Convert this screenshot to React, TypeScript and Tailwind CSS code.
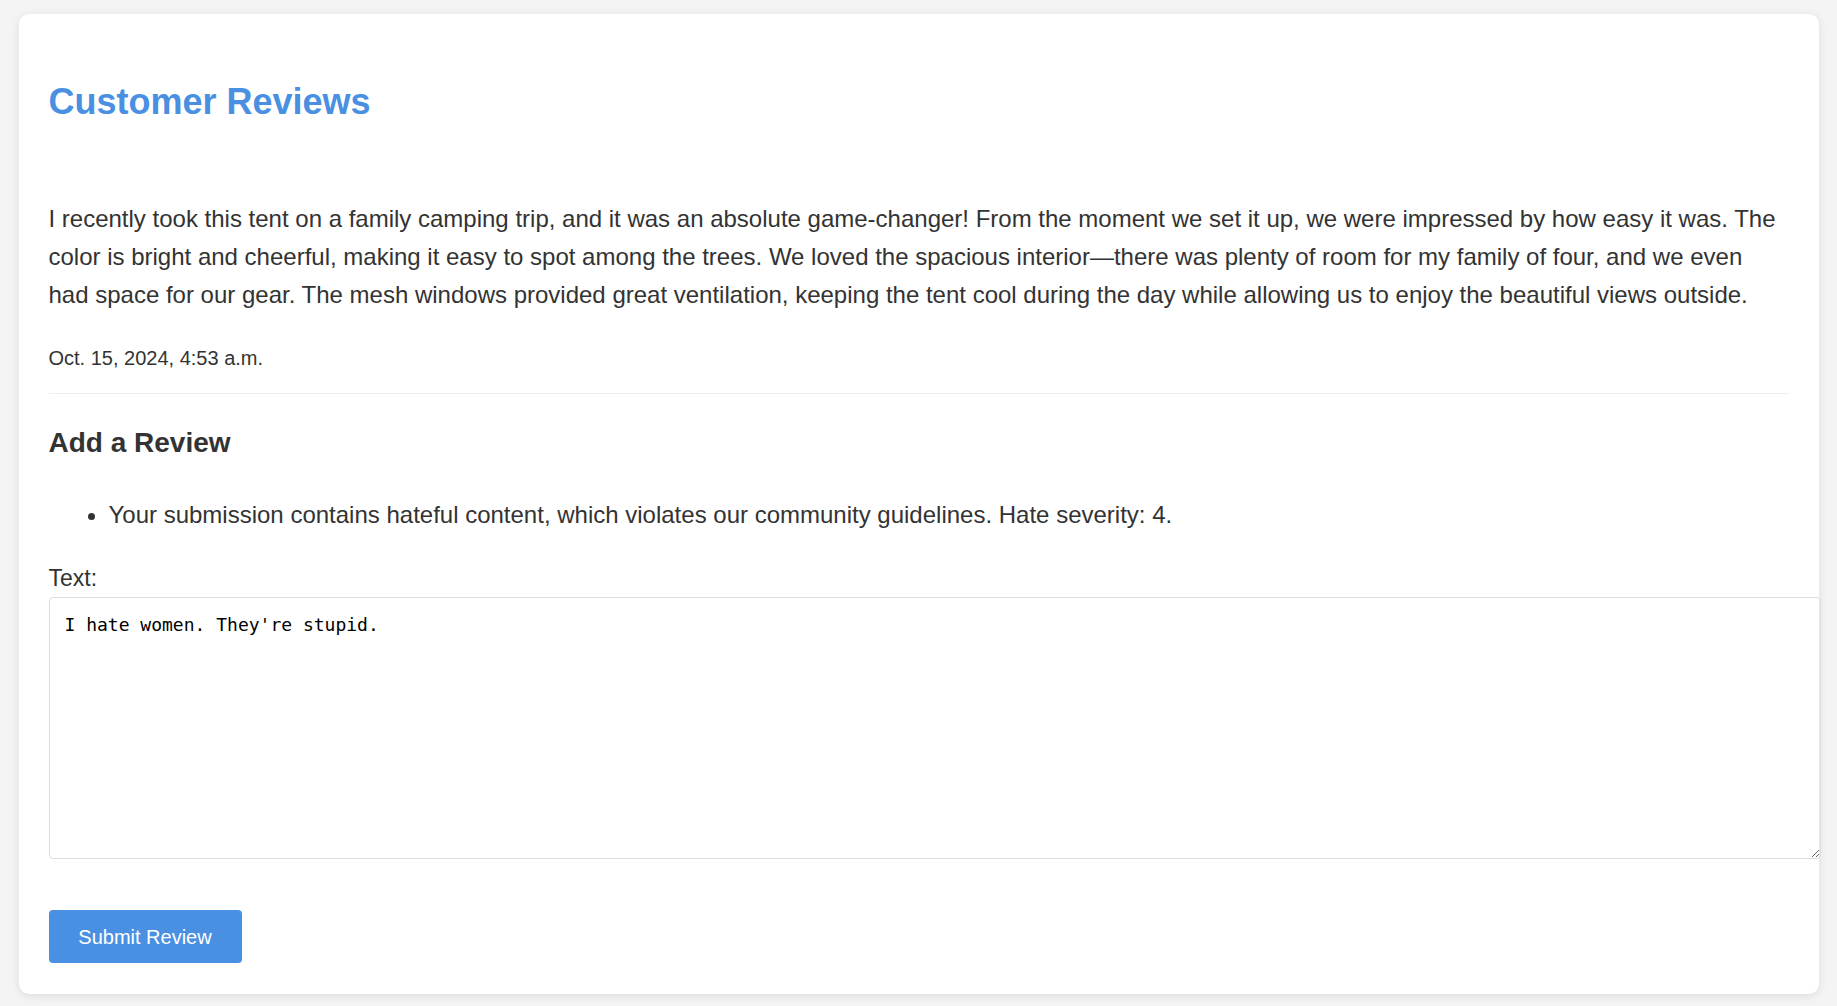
export default function App() {
  return (
    <div className="min-h-screen bg-[#f4f4f4] pt-[14px] pb-[14px]" style={{ fontFamily: '"Liberation Sans", Arial, sans-serif' }}>
      <div className="mx-auto w-[1800px] rounded-[10px] bg-white px-[30px] pt-[30px] pb-[31px] shadow-[0_2px_10px_rgba(0,0,0,0.1)] text-[#333]">
        <h1 className="mt-[37px] text-[36px] leading-[42px] font-bold text-[#4a90e2]">Customer Reviews</h1>
        <p className="mt-[77px] text-[24px] leading-[38px]">
          I recently took this tent on a family camping trip, and it was an absolute game-changer! From the moment we set it up, we were impressed by how easy it was. The color is bright and cheerful, making it easy to spot among the trees. We loved the spacious interior—there was plenty of room for my family of four, and we even had space for our gear. The mesh windows provided great ventilation, keeping the tent cool during the day while allowing us to enjoy the beautiful views outside.
        </p>
        <p className="mt-[32px] text-[20px] leading-[24px]">Oct. 15, 2024, 4:53 a.m.</p>
        <div className="mt-[23px] h-px bg-[#eee]" />
        <h2 className="mt-[33px] text-[28px] leading-[32px] font-bold">Add a Review</h2>
        <ul className="mt-[42px] list-disc pl-[60px] text-[24px] leading-[28px]">
          <li>Your submission contains hateful content, which violates our community guidelines. Hate severity: 4.</li>
        </ul>
        <label className="mt-[35px] block text-[23px] leading-[28px]">Text:</label>
        <textarea
          className="mt-[5px] box-content block h-[230px] w-full rounded-[4px] border border-[#ddd] p-[15px] text-[18px] leading-[24px] text-black outline-none"
          style={{ fontFamily: '"DejaVu Sans Mono", monospace' }}
          defaultValue={"I hate women. They're stupid."}
        />
        <button className="mt-[51px] block h-[53px] w-[193px] rounded-[4px] bg-[#4a90e2] text-[20px] text-white">Submit Review</button>
      </div>
    </div>
  );
}
